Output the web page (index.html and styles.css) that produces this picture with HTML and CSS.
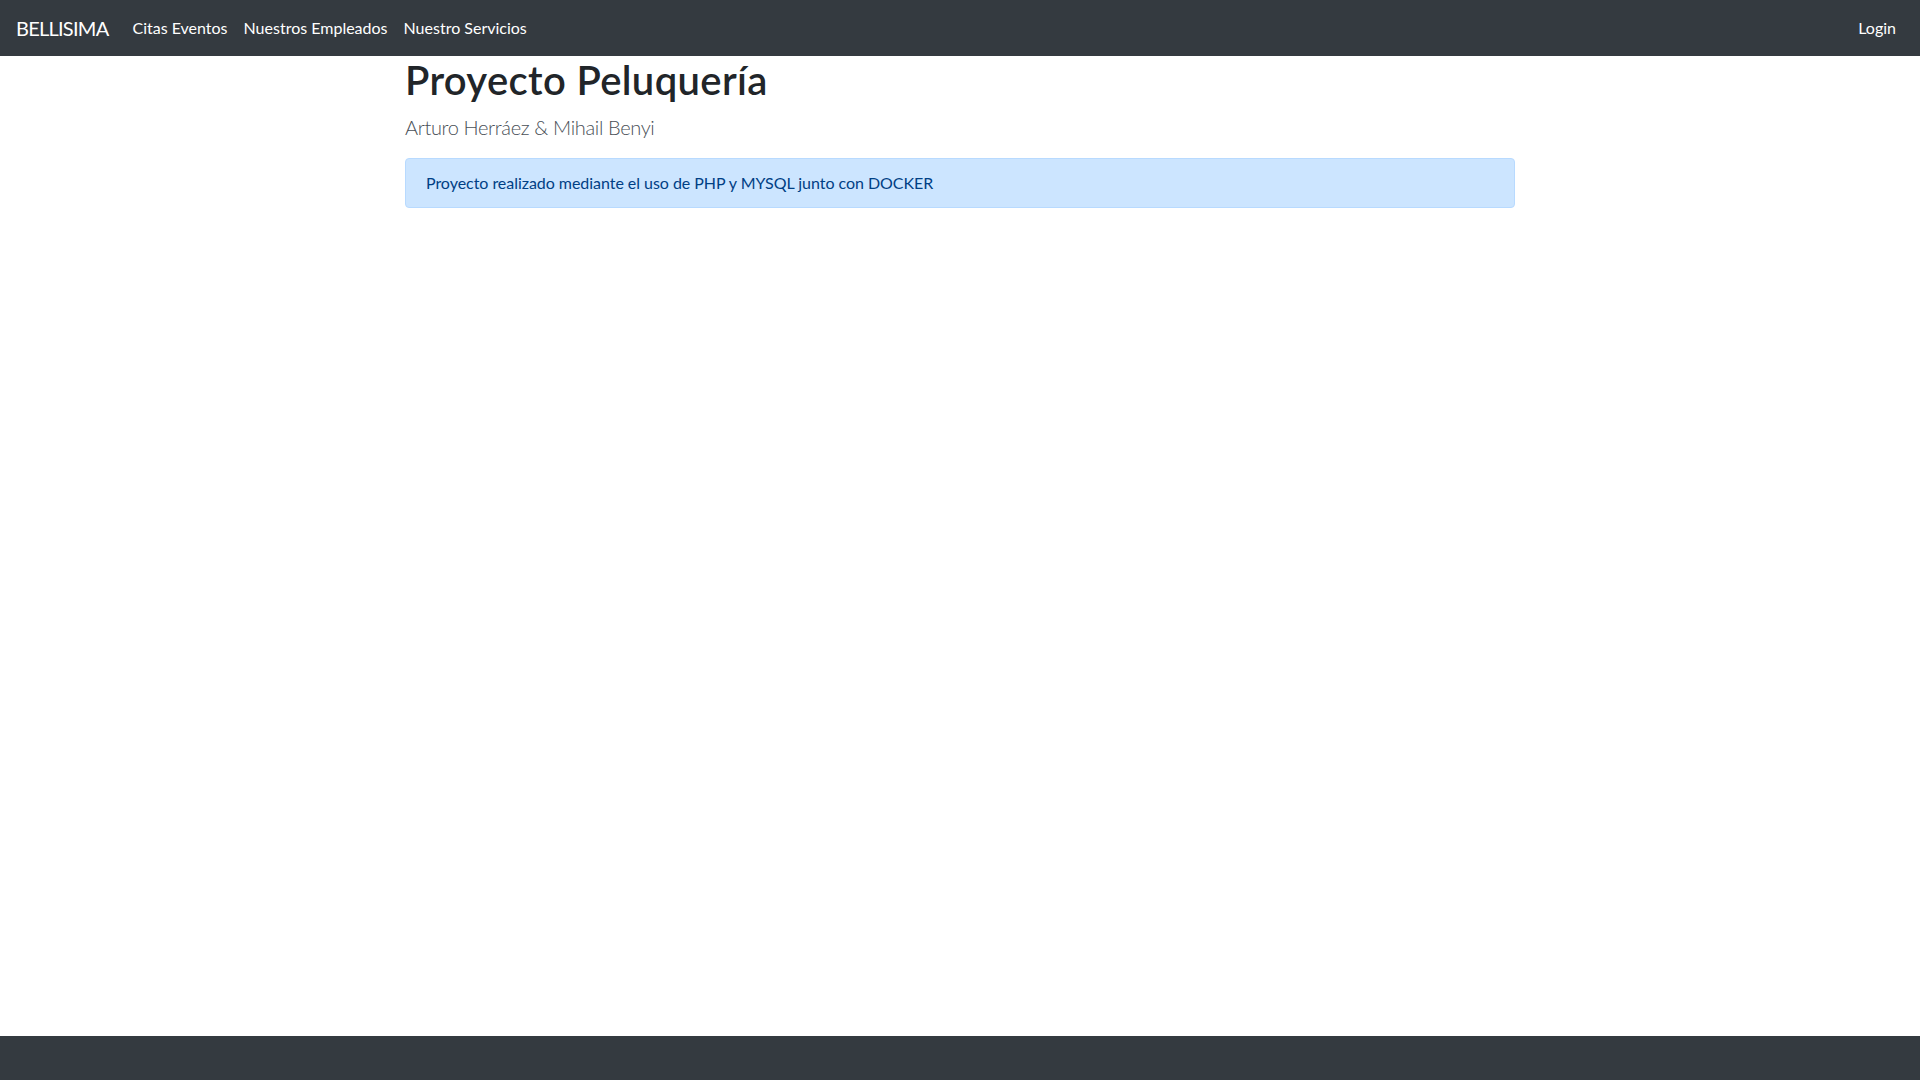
FILE: index.html
```html
<!DOCTYPE html>
<html lang="es">
<head>
<meta charset="utf-8">
<title>Bellisima</title>
<link rel="stylesheet" href="styles.css">
</head>
<body>
<nav class="navbar">
  <a class="brand" href="#">BELLISIMA</a>
  <ul class="nav">
    <li><a class="nav-link" href="#">Citas Eventos</a></li>
    <li><a class="nav-link" href="#">Nuestros Empleados</a></li>
    <li><a class="nav-link" href="#">Nuestro Servicios</a></li>
  </ul>
  <ul class="nav nav-right">
    <li><a class="nav-link" href="#">Login</a></li>
  </ul>
</nav>
<main class="main">
  <div class="container">
    <h1 class="title">Proyecto Peluquería</h1>
    <p class="lead">Arturo Herráez &amp; Mihail Benyi</p>
    <div class="alert">Proyecto realizado mediante el uso de PHP y MYSQL junto con DOCKER</div>
  </div>
</main>
<footer class="footer"></footer>
</body>
</html>
```
FILE: styles.css
```css
* { box-sizing: border-box; }
html, body { margin: 0; padding: 0; }
body {
  font-family: "Segoe UI", Lato, "Open Sans", sans-serif;
  font-size: 16px;
  line-height: 1.5;
  color: #212529;
  background: #fff;
  min-height: 100vh;
  display: flex;
  flex-direction: column;
}
a { text-decoration: none; }
.navbar {
  height: 56px;
  background: #343a40;
  display: flex;
  align-items: center;
  padding: 8px 16px;
}
.brand {
  color: #fff;
  font-size: 20px;
  line-height: 30px;
  margin-right: 16px;
  padding: 5px 0;
  letter-spacing: -0.75px;
}
.nav {
  list-style: none;
  margin: 0;
  padding: 0;
  display: flex;
}
.nav-right { margin-left: auto; }
.nav-link {
  display: block;
  color: #fff;
  padding: 8px 8px;
}
.main { flex: 1; }
.container {
  max-width: 1140px;
  margin: 0 auto;
  padding: 0 15px;
}
.title {
  margin: 0 0 8px;
  font-size: 40px;
  font-weight: 600;
  line-height: 1.2;
  letter-spacing: 0.35px;
}
.lead {
  margin: 0 0 16px;
  font-size: 20px;
  font-weight: 300;
  color: #495057;
  letter-spacing: -0.35px;
}
.alert {
  padding: 12px 20px;
  border: 1px solid #b8daff;
  border-radius: 4px;
  background: #cce5ff;
  color: #004085;
  letter-spacing: -0.04px;
}
.footer {
  height: 44px;
  background: #343a40;
}
```
